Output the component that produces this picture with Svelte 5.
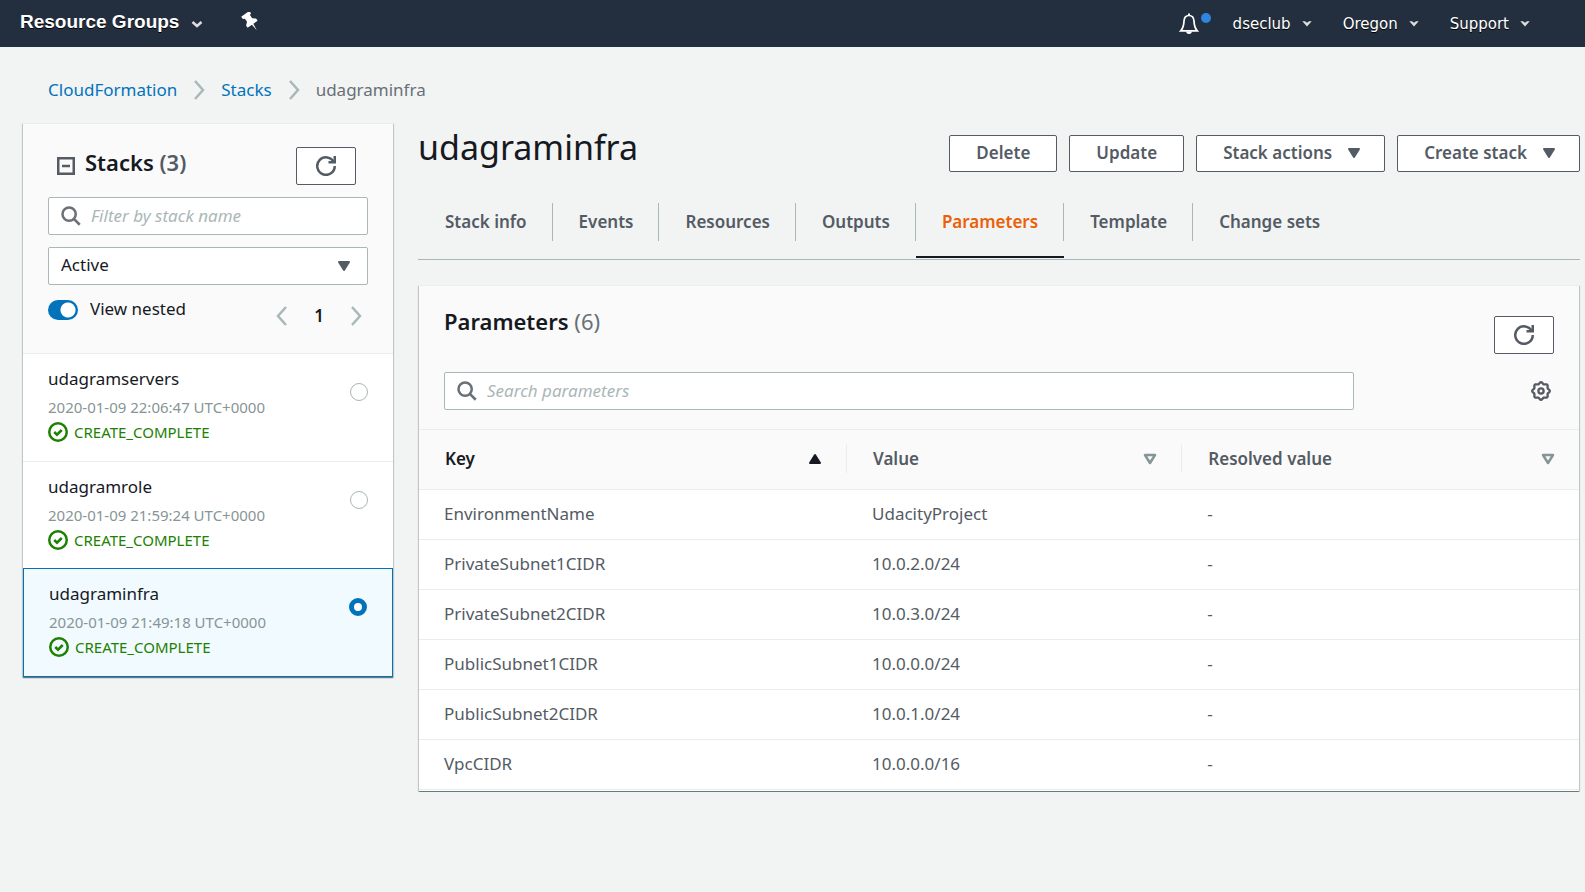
<script>
  const stacks = [
    { name: 'udagramservers', created: '2020-01-09 22:06:47 UTC+0000', status: 'CREATE_COMPLETE' },
    { name: 'udagramrole', created: '2020-01-09 21:59:24 UTC+0000', status: 'CREATE_COMPLETE' },
    { name: 'udagraminfra', created: '2020-01-09 21:49:18 UTC+0000', status: 'CREATE_COMPLETE' }
  ];
  const tabs = ['Stack info', 'Events', 'Resources', 'Outputs', 'Parameters', 'Template', 'Change sets'];
  const parameters = [
    ['EnvironmentName', 'UdacityProject', '-'],
    ['PrivateSubnet1CIDR', '10.0.2.0/24', '-'],
    ['PrivateSubnet2CIDR', '10.0.3.0/24', '-'],
    ['PublicSubnet1CIDR', '10.0.0.0/24', '-'],
    ['PublicSubnet2CIDR', '10.0.1.0/24', '-'],
    ['VpcCIDR', '10.0.0.0/16', '-']
  ];

  let selected = $state('udagraminfra');
  let activeTab = $state('Parameters');
  let nested = $state(true);

  // Closed outline of an eight-toothed gear centred in a 20px box.
  const gear =
    Array.from({ length: 96 }, (_, i) => {
      const a = (i / 96) * Math.PI * 2;
      const r = 8 + 0.8 * Math.cos(8 * a);
      return `${i ? 'L' : 'M'}${(10 + r * Math.cos(a)).toFixed(2)} ${(10 + r * Math.sin(a)).toFixed(2)}`;
    }).join('') + 'Z';
</script>

{#snippet navCaret()}
  <svg class="nav-caret" viewBox="0 0 12 8" aria-hidden="true"><path d="M1.300 1.200H4L6 2.800l2-1.600h2.700L6 6.600z" /></svg>
{/snippet}

{#snippet refresh()}
  <svg class="icon" viewBox="0 0 16 16" aria-hidden="true">
    <path d="M10 5h5V0" />
    <path d="M15 8a7 7 0 1 1-.7-3" />
  </svg>
{/snippet}

{#snippet search()}
  <svg class="icon search-icon" viewBox="0 0 16 16" aria-hidden="true">
    <circle cx="6.500" cy="6.500" r="5.3" />
    <path d="m15 15-4.700-4.700" />
  </svg>
{/snippet}

{#snippet caret()}
  <svg class="caret" viewBox="0 0 14 12" aria-hidden="true"><path d="M2 2h10L7 10z" /></svg>
{/snippet}

<header class="topbar">
  <button class="nav groups">Resource Groups <svg class="groups-caret" viewBox="0 0 12 8" aria-hidden="true"><path d="M1.500 2 6 6l4.500-4" /></svg></button>
  <button class="nav pin" aria-label="Pin shortcuts">
    <svg viewBox="0 0 18 18" aria-hidden="true">
      <g transform="rotate(-35 9 9)">
        <path d="M4.500 0h9v2.600l-1.700.8v3.400l2.700 2.300V11.500H3.500V9.100L6.200 6.800V3.400L4.500 2.600zM8.200 11.500h1.600L9 18z" />
      </g>
    </svg>
  </button>
  <button class="nav bell" aria-label="Notifications">
    <svg viewBox="0 0 20 22" aria-hidden="true">
      <path d="M10 2.500c-3.300 0-4.800 2.300-5 5.600-.2 4.400-.8 7-3.200 9.700h16.400c-2.400-2.700-3-5.300-3.200-9.700C14.800 4.800 13.300 2.500 10 2.500z" />
      <path class="solid" d="M7 18.500h6c-.3 1.700-1.500 2.500-3 2.500s-2.700-.8-3-2.500zM9 .6h2v2H9z" />
    </svg>
    <span class="dot"></span>
  </button>
  <button class="nav item">dseclub {@render navCaret()}</button>
  <button class="nav item">Oregon {@render navCaret()}</button>
  <button class="nav item">Support {@render navCaret()}</button>
</header>

<nav class="crumbs" aria-label="Breadcrumb">
  <a href="#cloudformation">CloudFormation</a>
  <svg class="chev" viewBox="0 0 12 20" aria-hidden="true"><path d="m2 1 8 9-8 9" /></svg>
  <a href="#stacks">Stacks</a>
  <svg class="chev" viewBox="0 0 12 20" aria-hidden="true"><path d="m2 1 8 9-8 9" /></svg>
  <span>udagraminfra</span>
</nav>

<div class="layout">
  <aside class="card stacks">
    <div class="stacks-head">
      <div class="title-row">
        <svg class="collapse" viewBox="0 0 18 18" aria-hidden="true"><path d="M1.250 1.250h15.500v15.500H1.250zM5 9h8" /></svg>
        <h2>Stacks <span>(3)</span></h2>
        <button class="btn square" aria-label="Refresh stacks">{@render refresh()}</button>
      </div>
      <div class="field">
        {@render search()}
        <input type="text" placeholder="Filter by stack name" aria-label="Filter by stack name" />
      </div>
      <div class="field">
        <select aria-label="Stack status"><option>Active</option></select>
        {@render caret()}
      </div>
      <div class="nested-row">
        <label class="toggle"><input type="checkbox" bind:checked={nested} /><span>View nested</span></label>
        <div class="pages">
          <button aria-label="Previous page"><svg class="chev" viewBox="0 0 12 20" aria-hidden="true"><path d="m10 1-8 9 8 9" /></svg></button>
          <b>1</b>
          <button aria-label="Next page"><svg class="chev" viewBox="0 0 12 20" aria-hidden="true"><path d="m2 1 8 9-8 9" /></svg></button>
        </div>
      </div>
    </div>
    {#each stacks as s}
      <label class="stack" class:selected={selected === s.name}>
        <span class="info">
          <span class="name">{s.name}</span>
          <span class="date">{s.created}</span>
          <span class="status">
            <svg viewBox="0 0 16 16" aria-hidden="true"><circle cx="8" cy="8" r="7" /><path d="m5 8 2.200 2.200 3.800-3.800" /></svg>
            {s.status}
          </span>
        </span>
        <input type="radio" name="stack" value={s.name} bind:group={selected} />
      </label>
    {/each}
  </aside>

  <main>
    <div class="page-head">
      <h1>udagraminfra</h1>
      <button class="btn">Delete</button>
      <button class="btn">Update</button>
      <button class="btn menu">Stack actions {@render caret()}</button>
      <button class="btn menu">Create stack {@render caret()}</button>
    </div>
    <div class="tabs" role="tablist">
      {#each tabs as t}
        <button role="tab" aria-selected={activeTab === t} class:active={activeTab === t} onclick={() => (activeTab = t)}><span>{t}</span></button>
      {/each}
    </div>

    <section class="card">
      <div class="params-head">
        <div class="params-title">
          <h2>Parameters <span>(6)</span></h2>
          <button class="btn square" aria-label="Refresh parameters">{@render refresh()}</button>
        </div>
        <div class="params-search">
          <div class="field">
            {@render search()}
            <input type="text" placeholder="Search parameters" aria-label="Search parameters" />
          </div>
          <button class="gear" aria-label="Preferences">
            <svg viewBox="0 0 20 20" aria-hidden="true"><path d={gear} /><circle cx="10" cy="10" r="2.600" /></svg>
          </button>
        </div>
      </div>
      <table>
        <thead>
          <tr>
            <th class="sorted"><div>Key <svg class="sort" viewBox="0 0 14 12" aria-hidden="true"><path d="M2 10h10L7 2z" /></svg></div></th>
            <th><div>Value <svg class="sort open" viewBox="0 0 14 12" aria-hidden="true"><path d="M2 2h10L7 10z" /></svg></div></th>
            <th><div>Resolved value <svg class="sort open" viewBox="0 0 14 12" aria-hidden="true"><path d="M2 2h10L7 10z" /></svg></div></th>
          </tr>
        </thead>
        <tbody>
          {#each parameters as row}
            <tr>{#each row as cell}<td>{cell}</td>{/each}</tr>
          {/each}
        </tbody>
      </table>
    </section>
  </main>
</div>

<style>
  :global(body) {
    background: #f2f3f3;
    color: #16191f;
    font: 17px/24px 'Noto Sans', 'Open Sans', sans-serif;
  }
  :global(*) { box-sizing: border-box; }
  button, input, select { font: inherit; color: inherit; margin: 0; }
  button { background: none; border: 0; padding: 0; cursor: pointer; }
  h1, h2 { margin: 0; }
  svg { display: block; flex: none; fill: none; stroke: currentColor; stroke-width: 2; }

  .topbar { display: flex; align-items: center; height: 47px; padding: 0 54px 0 20px; background: #232f3e; }
  .nav { display: flex; align-items: center; color: #fff; text-shadow: 0 1px 0 #000; }
  .groups { gap: 12px; padding-bottom: 4px; font: bold 19px/24px 'Liberation Sans', Arial, sans-serif; }
  .groups-caret { width: 12px; height: 8px; margin-top: 5px; stroke: #ddd; stroke-width: 2.5; }
  .pin { margin: 0 auto 3px 38px; }
  .pin svg { width: 20px; height: 20px; fill: #fff; stroke: none; }
  .bell { gap: 2px; align-items: flex-start; margin-right: 22px; }
  .bell svg { width: 20px; height: 22px; stroke-width: 1.700; }
  .bell .solid { fill: #fff; stroke: none; }
  .dot { width: 10px; height: 10px; border-radius: 50%; background: #2e86de; }
  .item { gap: 10px; margin-left: 30px; font: 15px/24px 'DejaVu Sans', Verdana, sans-serif; }
  .bell + .item { margin-left: 0; }
  .nav-caret { width: 12px; height: 8px; fill: #ddd; stroke: none; }

  .crumbs { display: flex; align-items: center; gap: 16px; padding: 30px 48px 20px; line-height: 25px; color: #687078; }
  a { color: #0073bb; text-decoration: none; }
  .chev { width: 12px; height: 20px; stroke: #aab7b8; stroke-width: 2.5; }

  .layout { display: grid; grid-template-columns: 370px minmax(0, 1fr); gap: 25px; align-items: start; padding: 1px 5px 0 23px; }
  .card {
    background: #fff;
    border-top: 1px solid #eaeded;
    box-shadow: 0 1px 1px 0 rgba(0, 28, 36, 0.4), 1px 1px 1px 0 rgba(0, 28, 36, 0.15), -1px 1px 1px 0 rgba(0, 28, 36, 0.15);
  }

  .stacks-head { padding: 23px 25px 0; height: 230px; background: #fafafa; border-bottom: 1px solid #eaeded; }
  .title-row { display: flex; align-items: flex-start; margin: 0 12px 12px 9px; }
  .collapse { width: 18px; height: 18px; margin: 10px 10px 0 0; color: #545b64; stroke-width: 2.5; }
  h2 { flex: 1; font-size: 22px; line-height: 30px; font-weight: 600; }
  h2 span { color: #687078; font-weight: 400; }
  .stacks h2 span { font-weight: 600; color: #545b64; }
  .btn { display: flex; align-items: center; justify-content: center; gap: 15px; height: 37px; padding: 0 26px 1px; border: 1px solid #545b64; border-radius: 2px; background: #fff; color: #545b64; font-weight: 600; white-space: nowrap; }
  .menu { padding-right: 23px; }
  .square { width: 60px; height: 38px; padding: 0; }
  .icon { width: 20px; height: 20px; }
  .caret { width: 14px; height: 12px; fill: #545b64; stroke: #545b64; stroke-linejoin: round; }

  .field { display: flex; align-items: center; height: 38px; margin-bottom: 12px; padding: 0 12px; border: 1px solid #aab7b8; border-radius: 2px; background: #fff; }
  .field input { flex: 1; min-width: 0; padding: 0; border: 0; outline: 0; background: none; }
  .field input::placeholder { color: #aab7b8; font-style: italic; opacity: 1; }
  .field select { flex: 1; padding: 0 0 2px; border: 0; outline: 0; background: none; appearance: none; }
  .field .caret { margin-right: 4px; }
  .search-icon { margin-right: 10px; color: #687078; }

  .nested-row { display: flex; align-items: flex-start; justify-content: space-between; }
  .toggle { display: flex; align-items: center; gap: 12px; }
  .toggle input { appearance: none; width: 30px; height: 20px; margin-top: 2px; border-radius: 10px; background: radial-gradient(circle at 20px 10px, #fff 7px, #0073bb 8px); }
  .toggle input:not(:checked) { background: radial-gradient(circle at 10px 10px, #fff 7px, #687078 8px); }
  .pages { display: flex; align-items: center; gap: 26px; padding: 7px 6px 0 0; }
  .pages b { font-weight: 600; }

  .stack { display: flex; justify-content: space-between; padding: 12px 25px 0; height: 108px; border-bottom: 1px solid #eaeded; }
  .selected { margin-top: -2px; height: 109px; border: 1px solid #0073bb; background: #f1faff; }
  .info { display: flex; flex-direction: column; }
  .name { line-height: 26px; }
  .date { font-size: 15px; line-height: 30px; color: #879596; }
  .status { display: flex; align-items: center; gap: 6px; font-size: 15px; line-height: 20px; color: #1d8102; }
  .status svg { width: 20px; height: 20px; }
  .stack input { appearance: none; width: 18px; height: 18px; margin-top: 17px; border: 1px solid #aab7b8; border-radius: 50%; background: #fff; }
  .stack input:checked { border: 5px solid #0073bb; }

  .page-head { display: flex; align-items: flex-start; gap: 12px; padding-top: 12px; }
  h1 { flex: 1; margin-top: -10px; font-size: 34px; line-height: 44px; font-weight: 400; }
  .tabs { display: flex; height: 88px; padding: 31px 0 0 1px; border-bottom: 1px solid #aab7b8; }
  .tabs button { display: flex; align-items: flex-start; color: #545b64; font-weight: 600; border-bottom: 2px solid transparent; margin-bottom: 1px; }
  .tabs span { padding: 0 25px 0 26px; line-height: 38px; border-right: 1px solid #aab7b8; }
  .tabs button:last-child span { border: 0; }
  .tabs .active { color: #eb5f07; border-bottom-color: #16191f; }
  main .card { margin: 25px 1px 1px; padding-bottom: 1px; }

  .params-head { padding: 20px 25px 0; height: 143px; background: #fafafa; }
  .params-title { display: flex; align-items: flex-start; }
  .params-title .btn { margin-top: 10px; }
  .params-search { display: flex; align-items: center; justify-content: space-between; padding-top: 18px; }
  .params-search .field { flex: 0 1 910px; margin: 0; }
  .gear { margin-right: 3px; color: #545b64; }
  .gear svg { width: 20px; height: 20px; stroke-width: 2.300; }

  table { width: 100%; table-layout: fixed; border-collapse: separate; border-spacing: 0; }
  th { height: 61px; padding: 0 0 2px; text-align: left; font-weight: 600; color: #545b64; background: #fafafa; border-top: 1px solid #eaeded; border-bottom: 1px solid #eaeded; }
  th:nth-child(1) { width: 36.9%; }
  th:nth-child(2) { width: 28.9%; }
  th div { display: flex; align-items: center; justify-content: space-between; height: 29px; padding: 0 24px 0 26px; border-right: 1px solid #eaeded; }
  th:last-child div { border: 0; }
  .sorted { color: #16191f; }
  .sort { width: 14px; height: 12px; fill: currentColor; stroke-linejoin: round; }
  .open { fill: none; color: #879596; stroke-width: 2.500; }
  td { height: 50px; padding: 0 25px 1px; color: #545b64; border-bottom: 1px solid #eaeded; }
</style>
